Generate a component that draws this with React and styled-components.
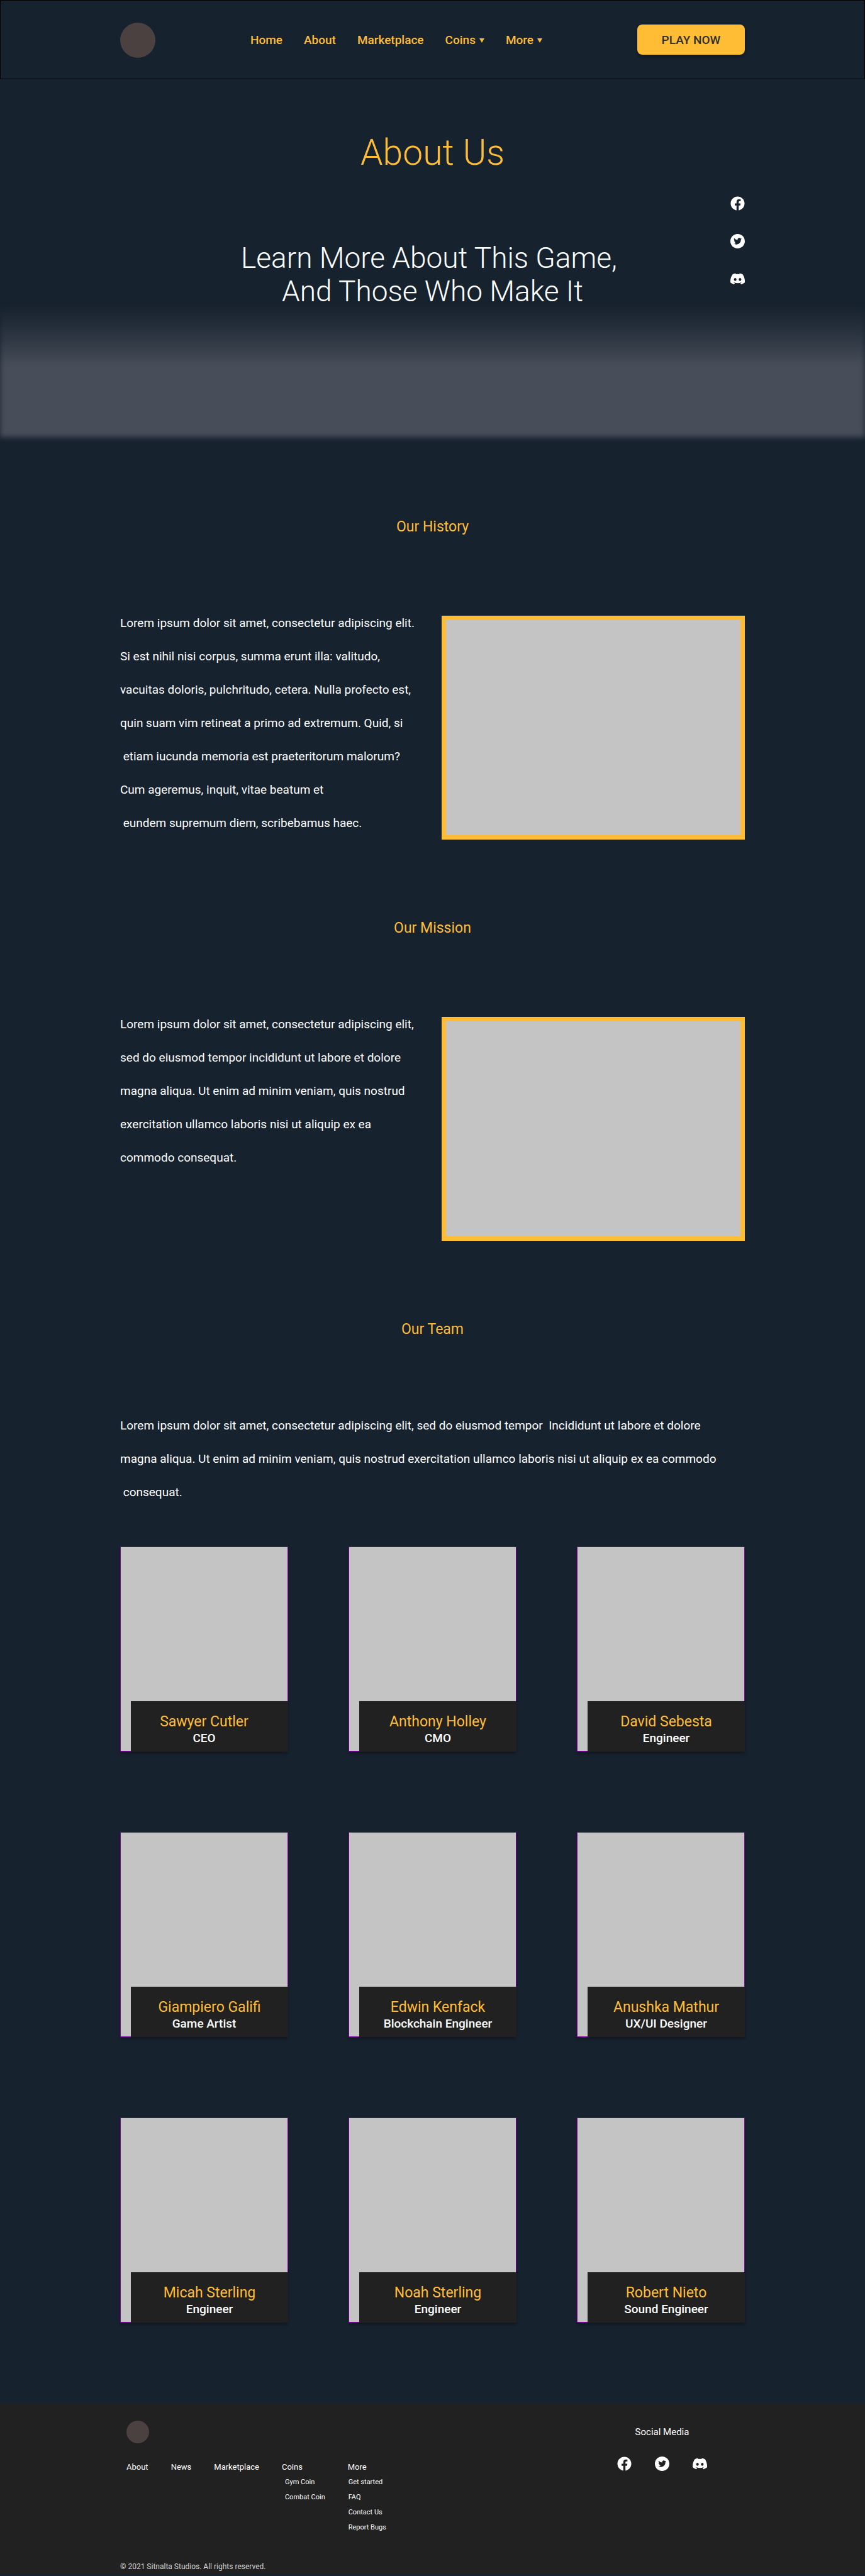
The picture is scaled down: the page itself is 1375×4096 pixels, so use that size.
import React from "react";
import styled, { createGlobalStyle } from "styled-components";

const color = {
  page: "#17222f",
  accent: "#ffbd35",
  dark: "#212121",
  media: "#c4c4c4",
  logo: "#4b4140",
  haze: "#474e59",
  frame: "#8400a5",
};

const GlobalStyle = createGlobalStyle`
  *, *::before, *::after { box-sizing: border-box; }
  body {
    margin: 0;
    background: ${color.page};
    color: #fff;
    font-family: Roboto, "Liberation Sans", sans-serif;
  }
  h1, h2, h3, p, ul { margin: 0; padding: 0; font-weight: 400; }
  ul { list-style: none; }
  a { color: inherit; text-decoration: none; }
  button { font: inherit; color: inherit; background: none; border: 0; padding: 0; cursor: pointer; }
`;

const Container = styled.div`
  width: 100%;
  max-width: 993px;
  margin: 0 auto;
`;

const Header = styled.header`
  border: 1px solid #000;
  padding: 35px 0 33px;
`;

const HeaderRow = styled(Container)`
  display: flex;
  align-items: center;
  justify-content: space-between;
`;

const Logo = styled.a`
  display: block;
  width: ${(p) => p.$size}px;
  height: ${(p) => p.$size}px;
  border-radius: 50%;
  background: ${color.logo};
`;

const Nav = styled.nav`
  display: flex;
  align-items: center;
  gap: 34px;
  color: ${color.accent};
  font-size: 19px;
  font-weight: 500;
  line-height: 22px;
`;

const NavToggle = styled.button`
  display: flex;
  align-items: center;
  gap: 6px;
`;

const PlayButton = styled.button`
  width: 171px;
  height: 48px;
  margin-bottom: 2px;
  border-radius: 8px;
  background: ${color.accent};
  box-shadow: 0 4px 4px rgba(0, 0, 0, 0.25);
  color: #2f2f2f;
  font-size: 19px;
  font-weight: 500;
`;

const Hero = styled.section`
  position: relative;
  height: 571px;
  padding-top: 83px;
  text-align: center;
`;

const Haze = styled.div`
  position: absolute;
  z-index: -1;
  inset: 350px 0 2px;
  background: linear-gradient(
    rgba(71, 78, 89, 0) 8px,
    rgba(71, 78, 89, 0.2) 34px,
    rgba(71, 78, 89, 0.52) 66px,
    ${color.haze} 106px
  );
  filter: blur(4px);
`;

const HeroTitle = styled.h1`
  color: ${color.accent};
  font-size: 57px;
  font-weight: 300;
  line-height: 68px;
`;

const HeroText = styled.p`
  margin-top: 107px;
  font-size: 46px;
  font-weight: 300;
  line-height: 53px;
  white-space: pre;
`;

const SideBar = styled(Container)`
  position: absolute;
  inset: 186px 0 auto;
  display: flex;
  justify-content: flex-end;
`;

const SocialList = styled.ul`
  display: flex;
  flex-direction: ${(p) => (p.$vertical ? "column" : "row")};
  gap: 37px;

  a, svg { display: block; }
`;

const SectionTitle = styled.h2`
  color: ${color.accent};
  font-size: 23px;
  line-height: 28px;
  text-align: center;
`;

const Section = styled(Container).attrs({ as: "section" })`
  margin-top: 127px;
`;

const Split = styled.div`
  display: grid;
  grid-template-columns: 1fr 482px;
  margin-top: 127px;
`;

const Copy = styled.p`
  margin-top: ${(p) => p.$top}px;
  font-size: 19px;
  line-height: 53px;
  white-space: pre;
`;

const Picture = styled.div`
  height: 356px;
  border: 7px solid ${color.accent};
  background: ${color.media};
`;

const Team = styled.ul`
  display: grid;
  grid-template-columns: repeat(3, 267px);
  justify-content: space-between;
  row-gap: 128px;
  margin-top: 60px;
`;

const Card = styled.li`
  display: flex;
  align-items: flex-end;
  height: 326px;
  padding-left: 17px;
  background: ${color.media};
  box-shadow: inset 0 0 0 1px ${color.frame}, 0 4px 4px rgba(0, 0, 0, 0.25);
`;

const Label = styled.div`
  flex: 1;
  height: 80px;
  padding-top: 19px;
  background: ${color.dark};
  text-align: center;
`;

/* Centred on the label, or on the whole card when $onCard is set. */
const Name = styled.h3`
  padding-right: ${(p) => (p.$onCard ? 17 : 0)}px;
  color: ${color.accent};
  font-size: 23px;
  line-height: 28px;
`;

const Role = styled.p`
  padding-right: ${(p) => (p.$onCard ? 17 : 0)}px;
  font-size: 19px;
  font-weight: 500;
  line-height: 24px;
`;

const Footer = styled.footer`
  margin: 129px 0 2px;
  padding: 27px 0 6px;
  background: ${color.dark};
`;

const FooterTop = styled.div`
  display: flex;
  justify-content: space-between;
  padding: 0 60px 0 10px;
`;

const FooterNav = styled.nav`
  display: flex;
  margin-top: 26px;
  font-size: 13px;
  line-height: 24px;
`;

const FooterColumn = styled.div`
  margin-right: 36px;
`;

const SubLinks = styled.ul`
  padding-left: ${(p) => p.$indent}px;
  font-size: 11px;
`;

const Social = styled.div`
  display: flex;
  flex-direction: column;
  align-items: center;
  gap: 30px;
  padding-top: 9px;
`;

const SocialTitle = styled.h2`
  font-size: 15px;
  line-height: 18px;
`;

const Copyright = styled.p`
  margin-top: 43px;
  color: #d3d3d3;
  font-size: 12px;
  line-height: 14px;
`;

const Caret = () => (
  <svg width="8" height="7" viewBox="0 0 8 7" aria-hidden="true">
    <path d="M0 0h8L4 7z" fill="currentColor" />
  </svg>
);

const icons = {
  Facebook: (
    <path d="M23.5 12.06C23.5 5.7 18.35.56 12 .56S.5 5.7.5 12.06c0 5.74 4.2 10.5 9.7 11.36v-8.03H7.28v-3.33h2.92V9.53c0-2.88 1.72-4.48 4.34-4.48 1.26 0 2.57.23 2.57.23v2.83h-1.45c-1.43 0-1.87.88-1.87 1.8v2.15h3.19l-.51 3.33h-2.68v8.03c5.5-.86 9.7-5.62 9.7-11.36z" />
  ),
  Twitter: (
    <path d="M12 0C5.37 0 0 5.37 0 12s5.37 12 12 12 12-5.37 12-12S18.63 0 12 0zm5.48 9.35c.01.12.01.24.01.36 0 3.63-2.76 7.81-7.81 7.81-1.56 0-3-.45-4.21-1.23.22.02.43.03.66.03 1.28 0 2.46-.43 3.4-1.17a2.75 2.75 0 0 1-2.57-1.9c.42.06.8.06 1.24-.05a2.74 2.74 0 0 1-2.19-2.7v-.03c.36.2.79.33 1.24.35a2.74 2.74 0 0 1-.85-3.67 7.8 7.8 0 0 0 5.66 2.87c-.39-1.86 1-3.37 2.67-3.37.79 0 1.5.33 2 .87a5.4 5.4 0 0 0 1.74-.66c-.2.64-.64 1.17-1.2 1.51.55-.06 1.09-.21 1.58-.42-.37.55-.84 1.03-1.37 1.4z" />
  ),
  Discord: (
    <path d="M20.32 4.37A19.8 19.8 0 0 0 15.43 2.85a.07.07 0 0 0-.08.04c-.21.37-.44.86-.6 1.25a18.3 18.3 0 0 0-5.5 0 12.6 12.6 0 0 0-.61-1.25.08.08 0 0 0-.08-.04A19.7 19.7 0 0 0 3.68 4.37C.53 9.05-.32 13.58.1 18.06c0 .02.01.04.03.05a19.9 19.9 0 0 0 6 3.03.08.08 0 0 0 .08-.03c.46-.63.87-1.3 1.23-2a.08.08 0 0 0-.04-.1 13 13 0 0 1-1.87-.9.08.08 0 0 1 0-.12l.37-.29a.07.07 0 0 1 .08-.01c3.92 1.79 8.18 1.79 12.06 0a.07.07 0 0 1 .08.01l.37.29a.08.08 0 0 1 0 .13c-.6.35-1.22.64-1.88.89a.08.08 0 0 0-.04.1c.36.7.77 1.37 1.23 2 .02.02.05.04.08.03a19.8 19.8 0 0 0 6-3.03.08.08 0 0 0 .04-.05c.5-5.18-.84-9.67-3.55-13.66a.06.06 0 0 0-.05-.03zM8.02 15.33c-1.18 0-2.16-1.08-2.16-2.42s.96-2.42 2.16-2.42c1.21 0 2.18 1.1 2.16 2.42 0 1.34-.96 2.42-2.16 2.42zm7.97 0c-1.18 0-2.15-1.08-2.15-2.42s.95-2.42 2.15-2.42c1.22 0 2.18 1.1 2.16 2.42 0 1.34-.94 2.42-2.16 2.42z" />
  ),
};

const SocialLinks = ({ vertical }) => (
  <SocialList $vertical={vertical}>
    {Object.keys(icons).map((name) => (
      <li key={name}>
        <a href="#" aria-label={name}>
          <svg width="23" height="23" viewBox="0 0 24 24" fill="#fff" aria-hidden="true">
            {icons[name]}
          </svg>
        </a>
      </li>
    ))}
  </SocialList>
);

const stories = [
  {
    title: "Our History",
    lines: [
      "Lorem ipsum dolor sit amet, consectetur adipiscing elit.",
      "Si est nihil nisi corpus, summa erunt illa: valitudo,",
      "vacuitas doloris, pulchritudo, cetera. Nulla profecto est,",
      "quin suam vim retineat a primo ad extremum. Quid, si",
      " etiam iucunda memoria est praeteritorum malorum?",
      "Cum ageremus, inquit, vitae beatum et",
      " eundem supremum diem, scribebamus haec.",
    ],
  },
  {
    title: "Our Mission",
    lines: [
      "Lorem ipsum dolor sit amet, consectetur adipiscing elit,",
      "sed do eiusmod tempor incididunt ut labore et dolore",
      "magna aliqua. Ut enim ad minim veniam, quis nostrud",
      "exercitation ullamco laboris nisi ut aliquip ex ea",
      "commodo consequat.",
    ],
  },
];

const teamLines = [
  "Lorem ipsum dolor sit amet, consectetur adipiscing elit, sed do eiusmod tempor  Incididunt ut labore et dolore",
  "magna aliqua. Ut enim ad minim veniam, quis nostrud exercitation ullamco laboris nisi ut aliquip ex ea commodo",
  " consequat.",
];

const members = [
  { name: "Sawyer Cutler", role: "CEO", nameOnCard: true, roleOnCard: true },
  { name: "Anthony Holley", role: "CMO" },
  { name: "David Sebesta", role: "Engineer" },
  { name: "Giampiero Galifi", role: "Game Artist", roleOnCard: true },
  { name: "Edwin Kenfack", role: "Blockchain Engineer" },
  { name: "Anushka Mathur", role: "UX/UI Designer" },
  { name: "Micah Sterling", role: "Engineer" },
  { name: "Noah Sterling", role: "Engineer" },
  { name: "Robert Nieto", role: "Sound Engineer" },
];

const footerLinks = [
  { title: "About" },
  { title: "News" },
  { title: "Marketplace" },
  { title: "Coins", indent: 5, items: ["Gym Coin", "Combat Coin"] },
  { title: "More", indent: 1, items: ["Get started", "FAQ", "Contact Us", "Report Bugs"] },
];

export default function App() {
  return (
    <>
      <GlobalStyle />
      <Header>
        <HeaderRow>
          <Logo $size={56} href="#" aria-label="Sitnalta Studios" />
          <Nav>
            <a href="#">Home</a>
            <a href="#">About</a>
            <a href="#">Marketplace</a>
            <NavToggle type="button">Coins<Caret /></NavToggle>
            <NavToggle type="button">More<Caret /></NavToggle>
          </Nav>
          <PlayButton type="button">PLAY NOW</PlayButton>
        </HeaderRow>
      </Header>

      <main>
        <Hero>
          <Haze />
          <HeroTitle>About Us</HeroTitle>
          <HeroText>{"Learn More About This Game, \nAnd Those Who Make It"}</HeroText>
          <SideBar>
            <SocialLinks vertical />
          </SideBar>
        </Hero>

        {stories.map((story) => (
          <Section key={story.title}>
            <SectionTitle>{story.title}</SectionTitle>
            <Split>
              <Copy $top={-15}>{story.lines.join("\n")}</Copy>
              <Picture />
            </Split>
          </Section>
        ))}

        <Section>
          <SectionTitle>Our Team</SectionTitle>
          <Copy $top={112}>{teamLines.join("\n")}</Copy>
          <Team>
            {members.map((m) => (
              <Card key={m.name}>
                <Label>
                  <Name $onCard={m.nameOnCard}>{m.name}</Name>
                  <Role $onCard={m.roleOnCard}>{m.role}</Role>
                </Label>
              </Card>
            ))}
          </Team>
        </Section>
      </main>

      <Footer>
        <Container>
          <FooterTop>
            <div>
              <Logo $size={36} href="#" aria-label="Sitnalta Studios" />
              <FooterNav>
                {footerLinks.map((col) => (
                  <FooterColumn key={col.title}>
                    <a href="#">{col.title}</a>
                    {col.items && (
                      <SubLinks $indent={col.indent}>
                        {col.items.map((item) => (
                          <li key={item}><a href="#">{item}</a></li>
                        ))}
                      </SubLinks>
                    )}
                  </FooterColumn>
                ))}
              </FooterNav>
            </div>
            <Social>
              <SocialTitle>Social Media</SocialTitle>
              <SocialLinks />
            </Social>
          </FooterTop>
          <Copyright>© 2021 Sitnalta Studios. All rights reserved.</Copyright>
        </Container>
      </Footer>
    </>
  );
}
